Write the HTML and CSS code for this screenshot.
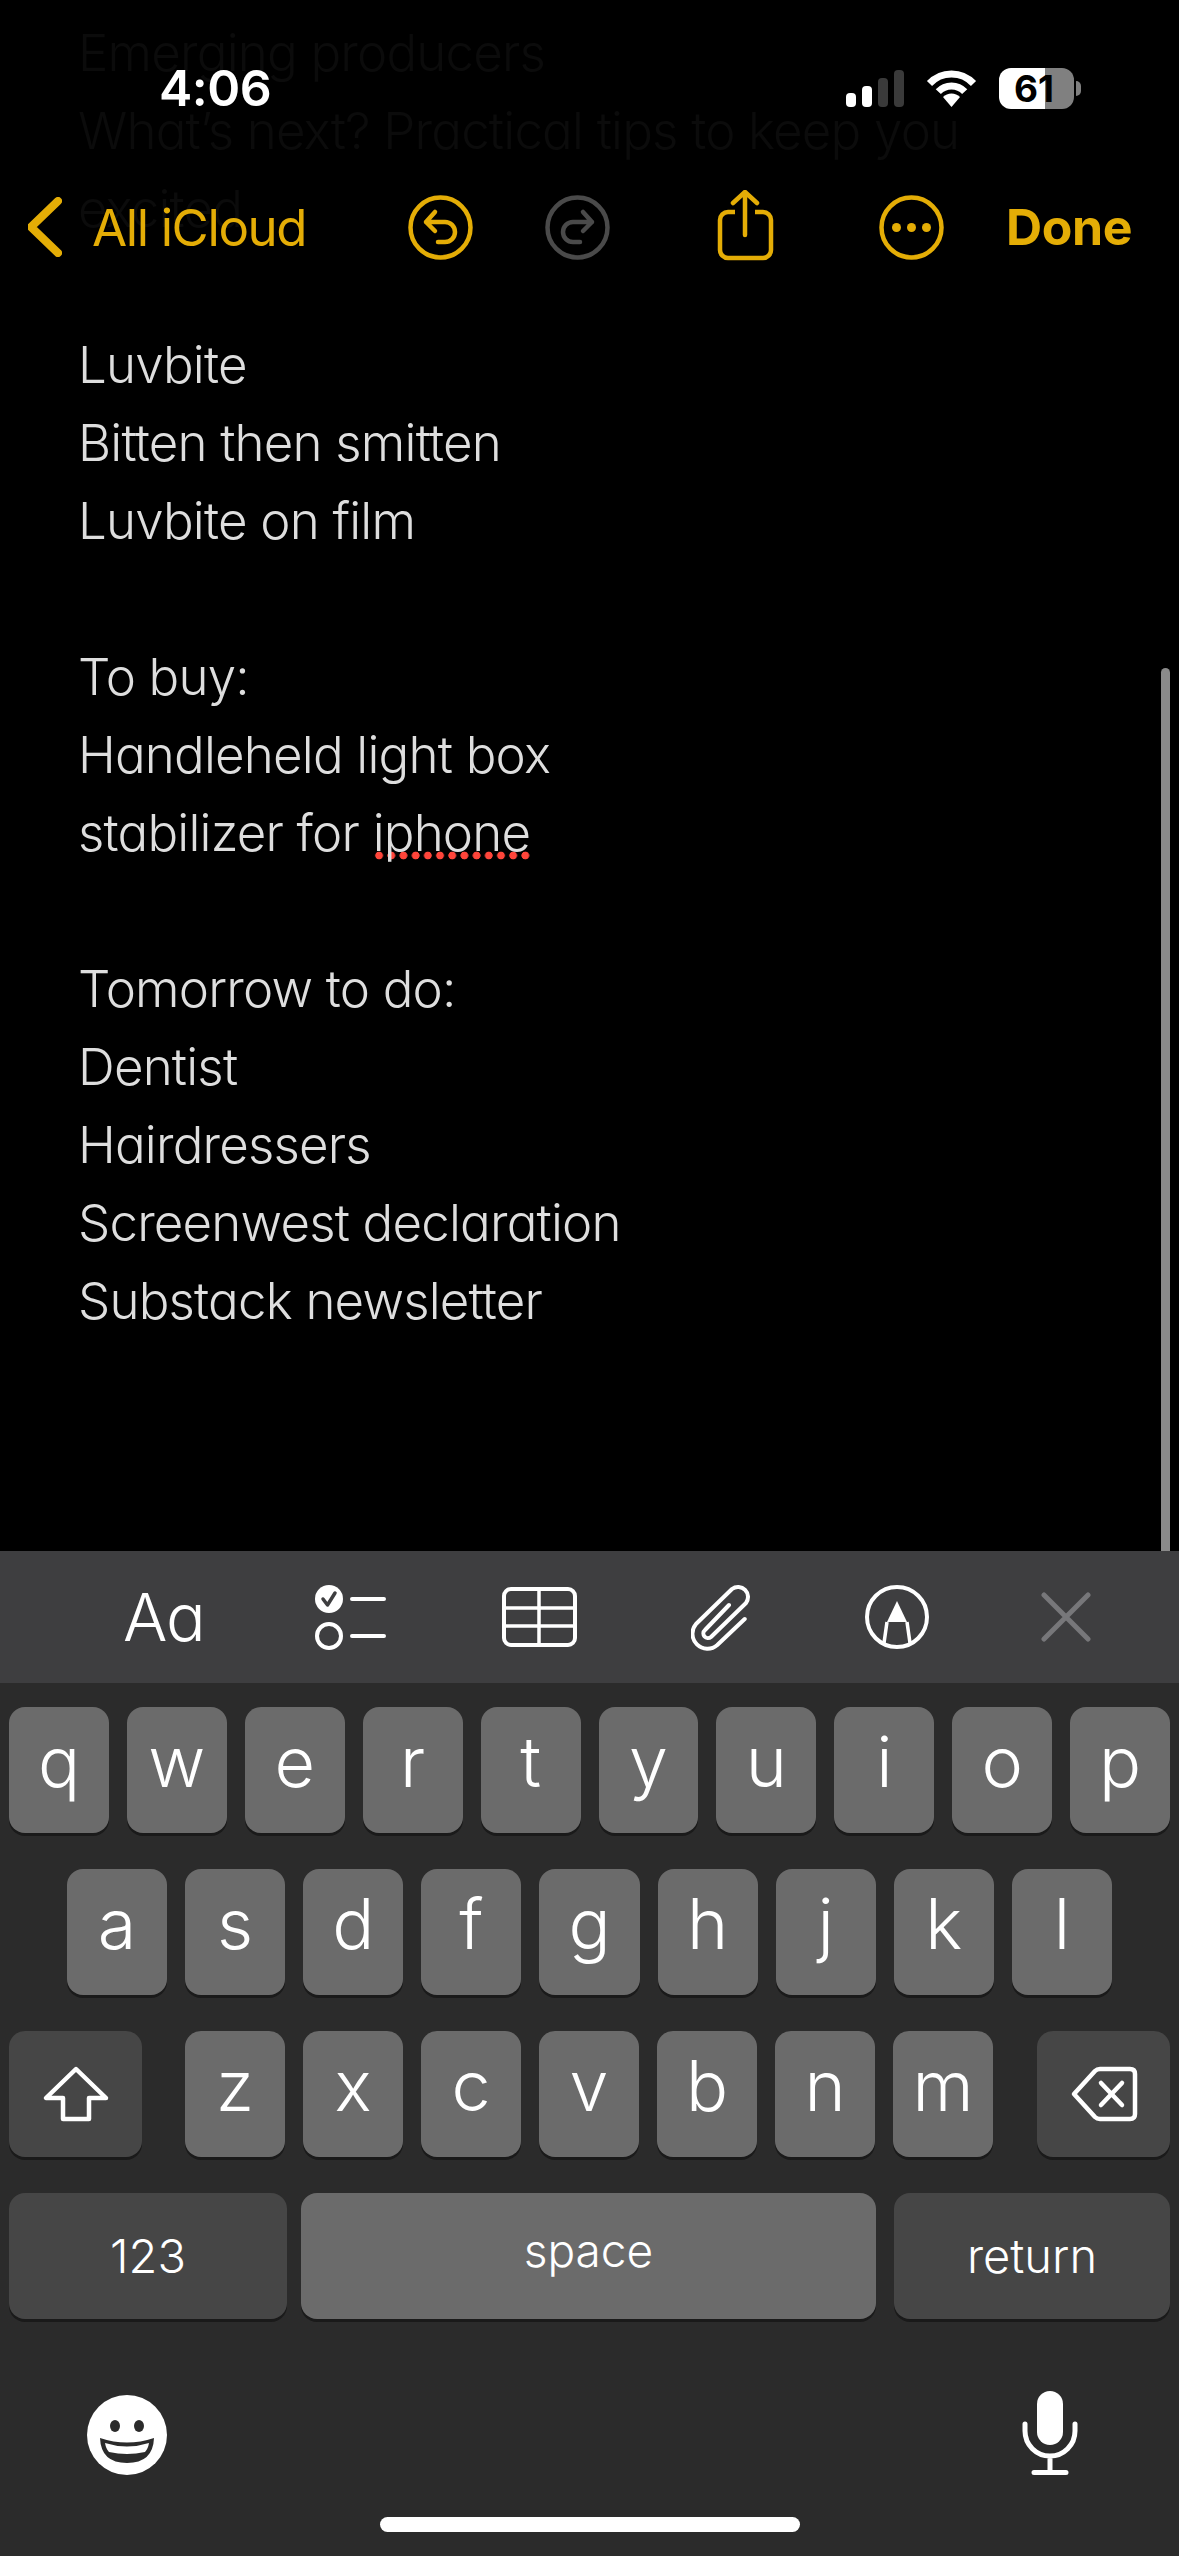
FILE: index.html
```html
<!DOCTYPE html>
<html lang="en">
<head>
  <meta charset="UTF-8">
  <meta name="viewport" content="width=device-width, initial-scale=1.0">
  <title>Notes</title>
  <link rel="stylesheet" href="styles.css">
</head>
<body>

  <div class="screen">
    <div class="note-area">
      <div class="note">
        <p class="under-bars">Emerging producers<br>What’s next? Practical tips to keep you<br>excited</p>
        <p>Luvbite<br>Bitten then smitten<br>Luvbite on film</p>
        <p>To buy:<br>Handleheld light box<br>stabilizer for <span class="misspelled">iphone</span></p>
        <p>Tomorrow to do:<br>Dentist<br>Hairdressers<br>Screenwest declaration<br>Substack newsletter</p>
      </div>

      <div class="scrollbar"></div>

      <!-- status bar and nav sit over the scrolled note -->
      <div class="top-bars">
        <div class="status-bar">
          <span class="time">4:06</span>
          <div class="status-icons">
            <svg width="58" height="37" viewBox="0 0 58 37">
              <rect x="0" y="23" width="10" height="14" rx="4" fill="#fff"/>
              <rect x="16" y="16" width="10" height="21" rx="4" fill="#fff"/>
              <rect x="32" y="8" width="10" height="29" rx="4" fill="#3a3a3a"/>
              <rect x="48" y="0" width="10" height="37" rx="4" fill="#3a3a3a"/>
            </svg>
            <svg width="51" height="37" viewBox="0 0 51 37">
              <path d="M3.5 13.5A30 30 0 0 1 47.5 13.5" fill="none" stroke="#fff" stroke-width="7"/>
              <path d="M12.3 21.7A18 18 0 0 1 38.7 21.7" fill="none" stroke="#fff" stroke-width="7"/>
              <path d="M25.5 37L17 27A12 12 0 0 1 34 27Z" fill="#fff"/>
            </svg>
            <div class="battery">61</div>
          </div>
        </div>

        <div class="nav-bar">
          <div class="nav-back">
            <svg width="34" height="60" viewBox="0 0 34 60">
              <path d="M30 4L3 30L30 56" fill="none" stroke="#e4ad06" stroke-width="8" stroke-linecap="round" stroke-linejoin="round"/>
            </svg>
            <span class="back-label">All iCloud</span>
          </div>
          <svg class="nav-undo" width="65" height="65" viewBox="0 0 65 65" fill="none" stroke="#e4ad06" stroke-width="4.5" stroke-linecap="round" stroke-linejoin="round">
            <circle cx="32.5" cy="32.5" r="30"/>
            <path d="M27 17L18 27L27 36M18 27H37a10 10 0 0 1 0 20H30"/>
          </svg>
          <svg class="nav-redo" width="65" height="65" viewBox="0 0 65 65" fill="none" stroke="#4a4a4a" stroke-width="4.5" stroke-linecap="round" stroke-linejoin="round">
            <circle cx="32.5" cy="32.5" r="30"/>
            <path d="M38 17L47 27L38 36M47 27H28a10 10 0 0 0 0 20H35"/>
          </svg>
          <svg class="nav-share" width="58" height="74" viewBox="0 0 58 74" fill="none" stroke="#e4ad06" stroke-width="4.5" stroke-linecap="round" stroke-linejoin="round">
            <path d="M17 13L29 2L41 13M29 2V45"/>
            <path d="M19 22H12a8 8 0 0 0 -8 8V60a8 8 0 0 0 8 8H47a8 8 0 0 0 8-8V30a8 8 0 0 0 -8-8H39" stroke-linecap="butt"/>
          </svg>
          <svg class="nav-more" width="65" height="65" viewBox="0 0 65 65">
            <circle cx="32.5" cy="32.5" r="30" fill="none" stroke="#e4ad06" stroke-width="4.5"/>
            <circle cx="17.5" cy="32.5" r="4.5" fill="#e4ad06"/>
            <circle cx="32.5" cy="32.5" r="4.5" fill="#e4ad06"/>
            <circle cx="47.5" cy="32.5" r="4.5" fill="#e4ad06"/>
          </svg>
          <span class="done">Done</span>
        </div>
      </div>
    </div>

    <div class="toolbar">
      <span class="tool-text">Aa</span>
      <svg width="71" height="65" viewBox="0 0 71 65" fill="none" stroke="#fff" stroke-width="4" stroke-linecap="round">
        <circle cx="14" cy="14" r="14" fill="#fff" stroke="none"/>
        <path d="M8 14L12.500 20L20 8" stroke="#3e3e40" stroke-width="3.5" stroke-linejoin="round"/>
        <circle cx="14" cy="51" r="12"/>
        <path d="M37 14H69M37 51H69"/>
      </svg>
      <svg class="tool-table" width="77" height="60" viewBox="0 0 77 60" fill="none" stroke="#fff" stroke-width="4">
        <rect x="4" y="2" width="71" height="56" rx="7"/>
        <path d="M39 2V58M4 21H75M4 39H75" stroke-width="3.500"/>
      </svg>
      <svg width="60" height="68" viewBox="0 0 60 68" fill="none" stroke="#fff" stroke-width="4" stroke-linecap="round" stroke-linejoin="round">
        <path d="M53.700 36L26.300 62A15 15 0 0 1 5 41L41 6A10 10 0 0 1 55 20L20 54A4.500 4.500 0 0 1 14 47L38 22"/>
      </svg>
      <svg width="64" height="64" viewBox="0 0 64 64" fill="none" stroke="#fff" stroke-width="4">
        <circle cx="32" cy="32" r="30"/>
        <path d="M32 16L22 37H42Z" fill="#fff" stroke="none"/>
        <path d="M22 37L19 58M42 37L45 58" stroke-width="3.500"/>
      </svg>
      <svg class="tool-close" width="50" height="50" viewBox="0 0 50 50" fill="none" stroke="#77777a" stroke-width="5" stroke-linecap="round">
        <path d="M3 3L47 47M47 3L3 47"/>
      </svg>
    </div>

    <div class="keyboard">
      <div class="key-row">
        <div class="key">q</div>
        <div class="key">w</div>
        <div class="key">e</div>
        <div class="key">r</div>
        <div class="key">t</div>
        <div class="key">y</div>
        <div class="key">u</div>
        <div class="key">i</div>
        <div class="key">o</div>
        <div class="key">p</div>
      </div>
      <div class="key-row row-home">
        <div class="key">a</div>
        <div class="key">s</div>
        <div class="key">d</div>
        <div class="key">f</div>
        <div class="key">g</div>
        <div class="key">h</div>
        <div class="key">j</div>
        <div class="key">k</div>
        <div class="key">l</div>
      </div>
      <div class="key-row">
        <div class="key key-dark key-shift">
          <svg width="70" height="60" viewBox="0 0 70 60" fill="none" stroke="#fff" stroke-width="4.500" stroke-linejoin="round">
            <path d="M35 5L5 34H22V55H48V34H65Z"/>
          </svg>
        </div>
        <div class="key key-first">z</div>
        <div class="key">x</div>
        <div class="key">c</div>
        <div class="key">v</div>
        <div class="key">b</div>
        <div class="key">n</div>
        <div class="key">m</div>
        <div class="key key-dark key-delete">
          <svg width="68" height="60" viewBox="0 0 68 60" fill="none" stroke="#fff" stroke-width="4.500" stroke-linecap="round" stroke-linejoin="round">
            <path d="M4 30L25 7Q27 5 30 5H60Q65 5 65 10V50Q65 55 60 55H30Q27 55 25 53Z"/>
            <path d="M31 19L52 41M52 19L31 41"/>
          </svg>
        </div>
      </div>
      <div class="key-row">
        <div class="key key-dark key-num">123</div>
        <div class="key key-space">space</div>
        <div class="key key-dark key-return">return</div>
      </div>

      <div class="keyboard-bottom">
        <svg class="emoji" width="80" height="80" viewBox="0 0 80 80">
          <circle cx="40" cy="40" r="40" fill="#fff"/>
          <ellipse cx="28" cy="31" rx="5" ry="6" fill="#2b2b2b"/>
          <ellipse cx="52" cy="31" rx="5" ry="6" fill="#2b2b2b"/>
          <path d="M13 43Q40 52 67 43Q66 68 40 68Q14 68 13 43Z" fill="#2b2b2b"/>
          <path d="M18 48Q40 55 62 48Q61 54 58 57Q40 61 22 57Q19 54 18 48Z" fill="#fff"/>
        </svg>
        <svg width="60" height="90" viewBox="0 0 60 90">
          <rect x="17" y="3" width="26" height="54" rx="13" fill="#fff"/>
          <path d="M5 36V43A25 25 0 0 0 55 43V36M30 68V84M14 84.500H46" fill="none" stroke="#fff" stroke-width="5" stroke-linecap="round"/>
        </svg>
      </div>
      <div class="home-bar"></div>
    </div>
  </div>

</body>
</html>
```

FILE: styles.css
```css
body {
  margin: 0;
  background: #000;
  font-family: 'Inter', 'Liberation Sans', sans-serif;
  font-feature-settings: "cv11";
}

.screen {
  width: 1179px;
  height: 2556px;
  display: flex;
  flex-direction: column;
  overflow: hidden;
}

/* note */
.note-area {
  position: relative;
  height: 1551px;
  flex-shrink: 0;
  overflow: hidden;
}

.note {
  padding: 14px 0 0 78px;
  font-size: 51px;
  font-weight: 350;
  letter-spacing: -0.8px;
  line-height: 78px;
  color: #dedede;
}

.note p {
  margin: 0 0 78px 0;
}

.note .under-bars {
  color: #0b0b0b;
}

.misspelled {
  background-image: radial-gradient(circle, #ff453a 3.6px, transparent 4.2px);
  background-size: 12.200px 9px;
  background-repeat: repeat-x;
  background-position: 0 calc(100% - 3px);
}

.scrollbar {
  position: absolute;
  top: 668px;
  bottom: 0;
  right: 9px;
  width: 9px;
  background: #8a8a8a;
  border-radius: 5px 5px 0 0;
}

.top-bars {
  position: absolute;
  top: 0;
  left: 0;
  right: 0;
}

/* status bar */
.status-bar {
  height: 176px;
  padding: 0 105px 0 159px;
  display: flex;
  align-items: center;
  justify-content: space-between;
}

.time {
  font-size: 50px;
  font-weight: 600;
  letter-spacing: -0.5px;
  color: #fff;
}

.status-icons {
  display: flex;
  align-items: center;
  gap: 22px;
}

.battery {
  position: relative;
  width: 75px;
  height: 41px;
  padding-right: 5px;
  box-sizing: border-box;
  border-radius: 12px;
  background: linear-gradient(to right, #fff 46px, #808080 46px);
  font-size: 37px;
  font-weight: 700;
  line-height: 41px;
  text-align: center;
  color: #000;
}

.battery::after {
  content: "";
  position: absolute;
  top: 13px;
  right: -7px;
  width: 5px;
  height: 15px;
  border-radius: 0 8px 8px 0;
  background: #808080;
}

/* nav */
.nav-bar {
  height: 102px;
  padding-left: 28px;
  display: flex;
  align-items: center;
}

.nav-back {
  width: 380px;
  display: flex;
  align-items: center;
  gap: 30px;
}

.back-label {
  font-size: 51px;
  font-weight: 400;
  letter-spacing: -1.4px;
  color: #e4ad06;
}

.nav-redo {
  margin-left: 72px;
}

.nav-share {
  margin-left: 106px;
}

.nav-more {
  margin-left: 105px;
}

.done {
  margin-left: 62px;
  font-size: 50px;
  font-weight: 700;
  letter-spacing: -0.4px;
  color: #e4ad06;
}

/* format toolbar */
.toolbar {
  height: 132px;
  padding-left: 123px;
  display: flex;
  align-items: center;
  gap: 114px;
  background: #3e3e40;
}

.tool-text {
  width: 78px;
  font-size: 66px;
  font-weight: 300;
  letter-spacing: -1px;
  color: #fff;
}

.tool-close {
  margin-left: -2px;
}

/* keyboard */
.keyboard {
  flex: 1;
  padding-top: 24px;
  background: #2b2b2b;
}

.key-row {
  display: flex;
  gap: 18px;
  padding: 0 9px;
  margin-bottom: 36px;
}

.row-home {
  padding: 0 67px;
}

.key {
  flex: 1;
  height: 126px;
  border-radius: 16px;
  background: #6b6b6b;
  box-shadow: 0 3px 0 #1a1a1a;
  font-feature-settings: normal;
  font-size: 70px;
  font-weight: 300;
  line-height: 109px;
  text-align: center;
  color: #fff;
}

.key-dark {
  background: #464646;
}

.key-shift,
.key-delete {
  flex: 0 0 133px;
  display: flex;
  align-items: center;
  justify-content: center;
}

.key-first {
  margin-left: 25px;
}

.key-delete {
  margin-left: 26px;
}

.key-num {
  flex: 0 0 278px;
  font-size: 47px;
  line-height: 125px;
}

.key-space {
  flex: 0 0 575px;
  margin-left: -4px;
  font-size: 46px;
  line-height: 115px;
}

.key-return {
  flex: 0 0 276px;
  font-size: 47px;
  line-height: 125px;
}

.keyboard-bottom {
  padding: 33px 99px 0 87px;
  display: flex;
  align-items: center;
  justify-content: space-between;
}

.emoji {
  margin-top: 4px;
}

.home-bar {
  width: 420px;
  height: 15px;
  margin: 39px auto 0 auto;
  border-radius: 8px;
  background: #fff;
}
```
